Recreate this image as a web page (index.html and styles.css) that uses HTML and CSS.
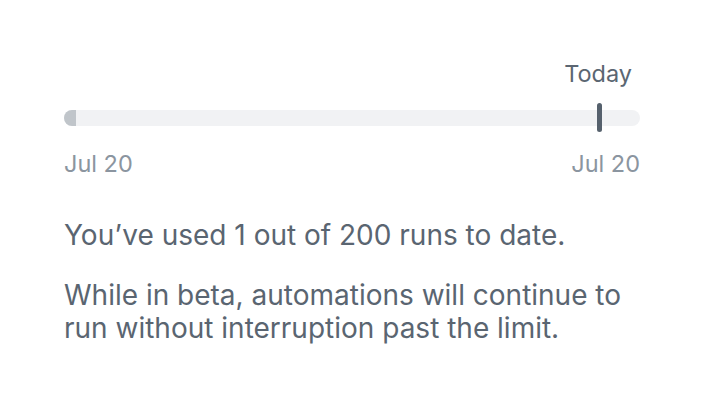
FILE: index.html
```html
<!DOCTYPE html>
<html lang="en">
<head>
<meta charset="utf-8">
<link rel="stylesheet" href="styles.css">
</head>
<body>
<div class="usage">
  <div class="timeline">
    <div class="today-label">Today</div>
    <div class="track">
      <div class="fill"></div>
      <div class="marker"></div>
    </div>
    <div class="dates">
      <span>Jul 20</span>
      <span>Jul 20</span>
    </div>
  </div>
  <p class="text first">You’ve used 1 out of 200 runs to date.</p>
  <p class="text second">While in beta, automations will continue to run without interruption past the limit.</p>
</div>
</body>
</html>
```
FILE: styles.css
```css
html, body {
  margin: 0;
  background: #ffffff;
}
body {
  font-family: Inter, "Noto Sans", sans-serif;
  color: #5a6571;
}
.usage {
  width: 576px;
  padding: 60px 0 0 64px;
}
.timeline {
  display: flex;
  flex-direction: column;
}
.today-label {
  align-self: flex-end;
  font-size: 23.5px;
  line-height: 28px;
  padding-right: 8px;
  color: #5b6672;
}
.track {
  position: relative;
  height: 16px;
  margin-top: 22px;
  background: #f1f2f4;
  border-radius: 8px;
}
.fill {
  width: 12px;
  height: 100%;
  background: #c0c5ca;
  border-radius: 8px 0 0 8px;
}
.marker {
  position: absolute;
  left: 533px;
  top: -7px;
  width: 5px;
  height: 29px;
  border-radius: 3px;
  background: #56616d;
}
.dates {
  display: flex;
  justify-content: space-between;
  margin-top: 24px;
  font-size: 23.5px;
  line-height: 28px;
  color: #8b95a0;
}
.text {
  margin: 0;
  font-size: 28px;
  line-height: 33px;
  color: #5a6571;
}
.first {
  margin-top: 41px;
}
.second {
  margin-top: 27px;
}
```
